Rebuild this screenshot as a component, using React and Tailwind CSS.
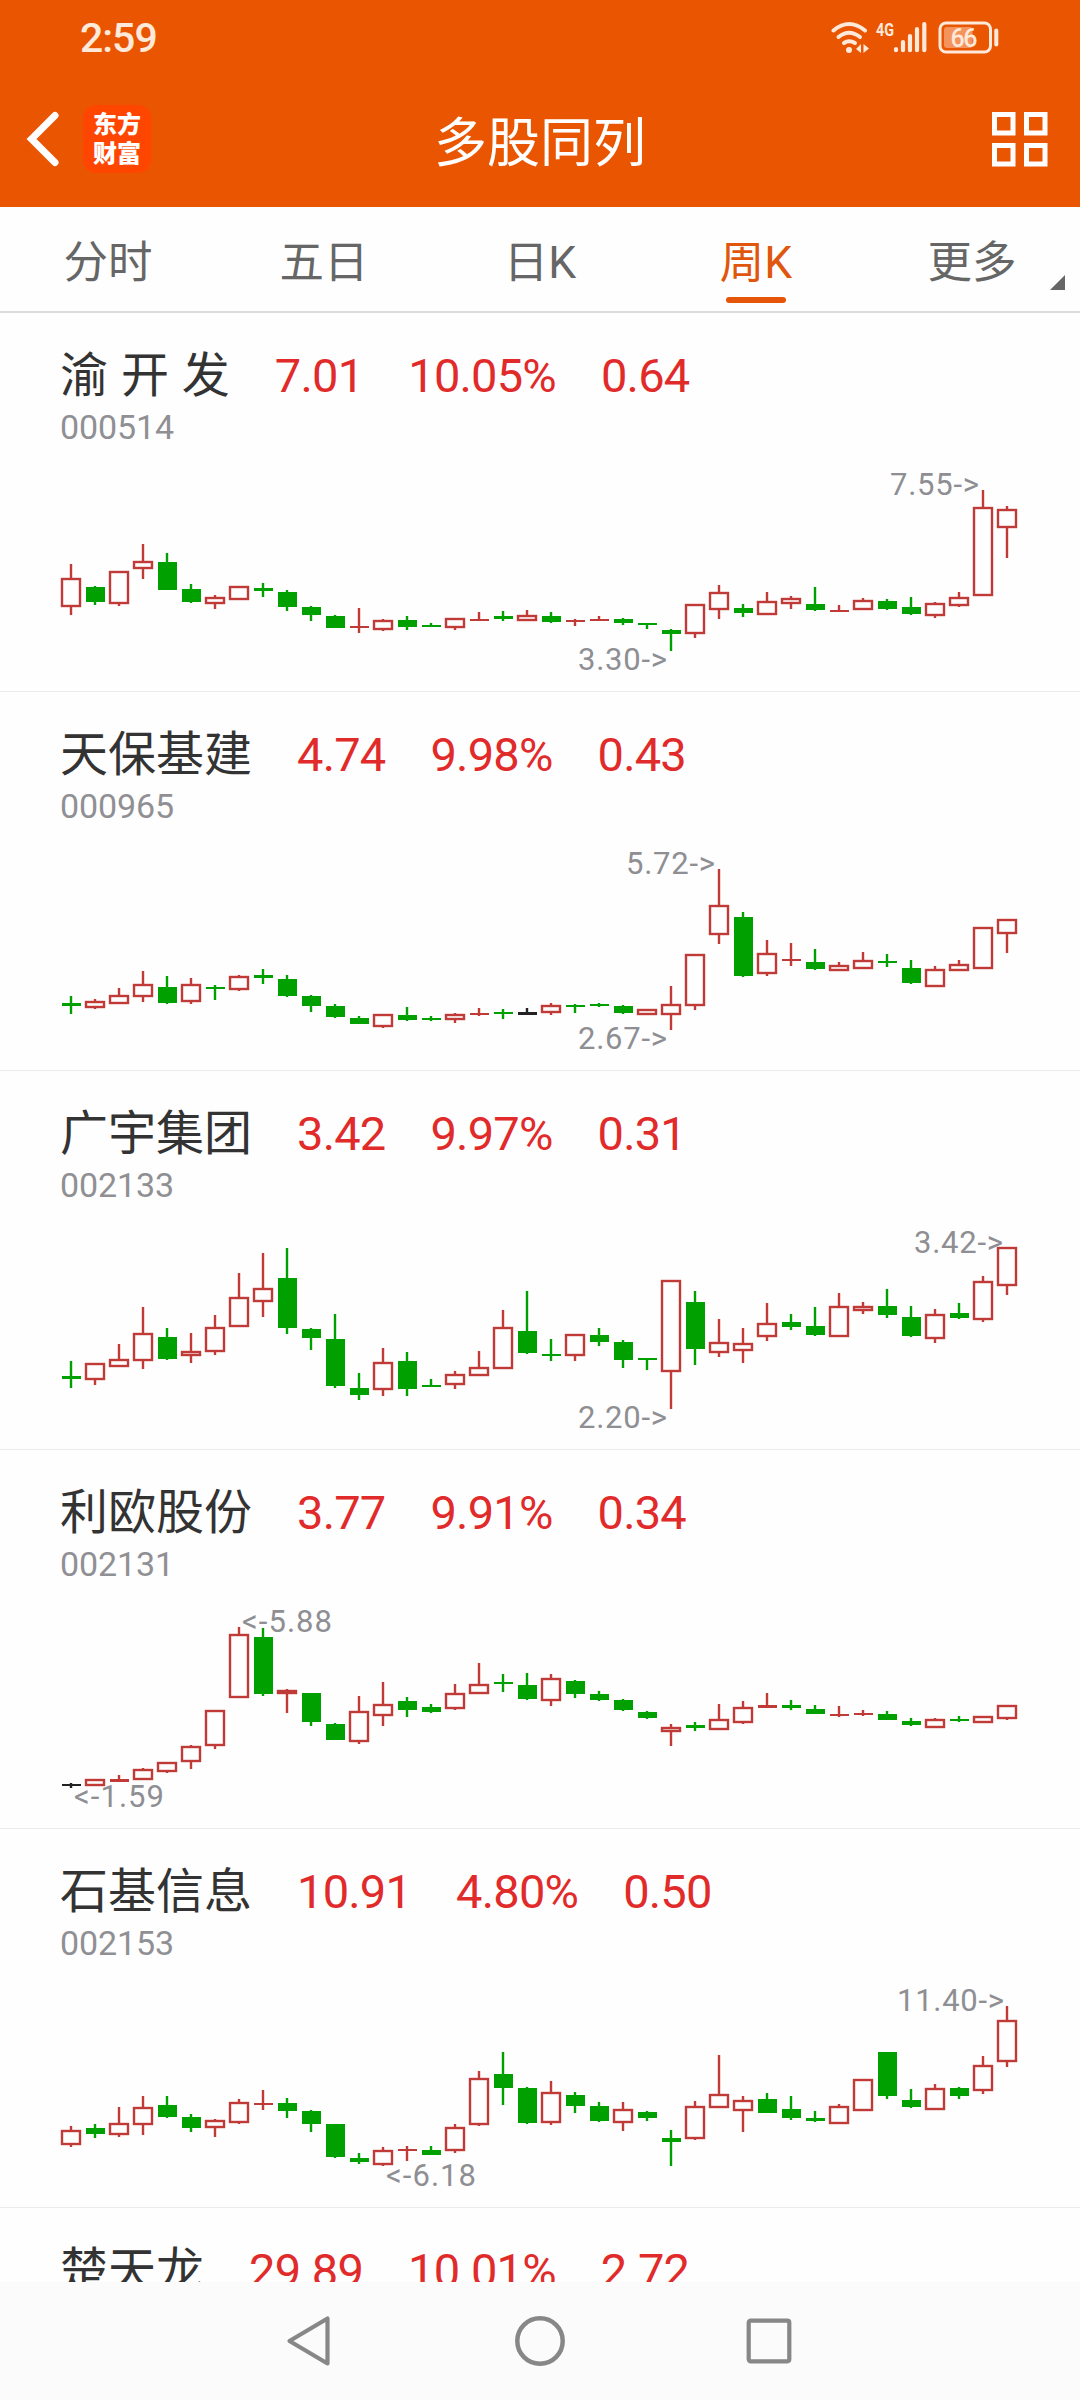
const UP = "#c03a37";
const DOWN = "#00a000";
const FLAT = "#222222";
const COLORS = { r: UP, g: DOWN, k: FLAT };

// Each candle: direction, high, body top, body bottom, low.
// Values are on the chart's fine grid; `scale` grid units make one pixel,
// `top` is where the grid starts inside the row.
const stocks = [
  {
    name: "渝 开 发", code: "000514", price: "7.01", pct: "10.05%", diff: "0.64",
    top: 17, scale: 3,
    labels: [["7.55->", 890, 182, 89], ["3.30->", 578, 357, 89]],
    candles: [
      ["r",703,744,831,854],["g",769,771,817,825],["r",724,724,822,828],["r",643,692,717,747],["g",669,695,779,779],
      ["g",762,778,817,818],["r",796,801,823,836],["r",768,768,810,810],["g",759,774,783,802],["g",781,786,830,843],
      ["g",829,831,856,872],["g",856,858,893,895],["r",835,888,894,909],["r",867,869,899,902],["g",858,870,891,899],
      ["g",878,885,891,892],["r",865,865,895,899],["r",847,866,872,873],["g",843,859,867,874],["r",841,855,874,874],
      ["g",845,859,876,879],["r",867,870,876,887],["r",857,866,872,873],["g",864,868,880,886],["g",878,878,885,896],
      ["g",898,900,912,963],["r",823,823,911,923],["r",766,785,841,867],["g",822,834,849,861],["r",787,814,855,855],
      ["r",797,805,822,837],["g",771,822,840,842],["r",825,839,846,846],["r",805,809,839,839],["g",808,813,838,840],
      ["g",801,831,852,855],["r",816,820,859,863],["r",785,801,828,832],["r",480,530,798,798],["r",529,538,593,684],
    ],
  },
  {
    name: "天保基建", code: "000965", price: "4.74", pct: "9.98%", diff: "0.43",
    top: 28, scale: 3,
    labels: [["5.72->", 626, 182, 89], ["2.67->", 578, 357, 89]],
    candles: [
      ["g",827,850,857,881],["r",838,842,865,868],["r",804,826,851,851],["r",753,792,831,846],["g",769,801,849,852],
      ["r",773,792,846,852],["g",794,800,808,840],["r",764,768,810,812],["g",746,766,773,792],["g",764,777,828,830],
      ["g",826,828,857,876],["g",851,857,891,895],["g",889,895,911,911],["r",881,883,921,925],["g",861,884,900,903],
      ["g",888,893,900,902],["r",878,882,901,909],["r",864,879,885,888],["g",867,875,881,896],["k",864,877,884,884],
      ["r",848,856,878,885],["g",853,854,860,878],["g",850,853,858,861],["g",855,857,879,882],["r",866,867,885,885],
      ["r",798,852,885,930],["r",702,702,858,871],["r",447,554,646,671],["g",577,590,768,771],["r",661,699,762,768],
      ["r",670,717,722,738],["g",687,726,747,749],["r",726,736,754,754],["r",696,719,747,747],["g",703,723,729,740],
      ["g",720,744,789,792],["r",738,747,800,800],["r",720,733,754,754],["r",622,622,747,747],["r",598,598,642,699],
    ],
  },
  {
    name: "广宇集团", code: "002133", price: "3.42", pct: "9.97%", diff: "0.31",
    top: 29, scale: 3,
    labels: [["3.42->", 914, 182, 89], ["2.20->", 578, 357, 89]],
    candles: [
      ["g",784,829,836,864],["r",788,789,839,855],["r",733,777,800,800],["r",622,699,783,808],["g",685,710,776,779],
      ["r",698,753,768,788],["r",646,682,756,765],["r",519,591,681,681],["r",460,563,605,650],["g",444,535,685,701],
      ["g",685,686,713,749],["g",642,717,859,863],["g",820,864,884,899],["r",744,785,871,887],["g",756,784,867,887],
      ["g",836,856,862,862],["r",813,821,855,867],["r",753,801,828,828],["r",630,682,807,807],["g",574,693,760,761],
      ["g",717,762,768,784],["r",701,702,768,784],["g",685,705,725,738],["g",721,726,780,804],["g",773,773,780,811],
      ["r",540,540,815,927],["g",574,606,748,796],["r",657,726,760,772],["r",685,730,752,788],["r",610,670,712,724],
      ["g",642,666,681,689],["g",622,678,705,709],["r",578,618,712,712],["r",606,618,633,641],["g",567,618,645,654],
      ["g",618,651,709,710],["r",626,642,717,729],["g",610,638,654,657],["r",527,543,661,665],["r",440,440,557,586],
    ],
  },
  {
    name: "利欧股份", code: "002131", price: "3.77", pct: "9.91%", diff: "0.34",
    top: 30, scale: 3,
    labels: [["<-5.88", 242, 182, 90], ["<-1.59", 74, 357, 90]],
    candles: [
      ["k",910,912,918,923],["r",897,898,917,917],["r",884,898,905,905],["r",864,867,901,901],["r",846,846,876,878],
      ["r",796,798,845,867],["r",689,689,797,807],["r",441,462,655,655],["g",443,471,642,647],["r",626,629,643,699],
      ["g",638,639,726,738],["g",728,732,779,781],["r",647,694,785,791],["r",606,672,708,738],["g",651,663,689,711],
      ["g",673,682,696,698],["r",612,638,687,689],["r",549,611,643,643],["g",582,607,613,636],["g",578,615,658,660],
      ["r",582,594,663,678],["g",601,603,641,654],["g",632,642,660,663],["g",657,660,690,692],["g",694,696,714,716],
      ["r",732,740,756,798],["g",726,736,743,753],["r",673,718,749,749],["r",664,682,729,731],["r",640,676,683,685],
      ["g",661,676,684,690],["g",675,687,702,702],["r",679,702,709,711],["r",690,700,706,708],["g",693,702,720,720],
      ["g",714,723,735,738],["r",714,716,744,744],["g",707,716,723,725],["r",708,708,728,728],["r",675,675,716,719],
    ],
  },
  {
    name: "石基信息", code: "002153", price: "10.91", pct: "4.80%", diff: "0.50",
    top: 31, scale: 2.904,
    labels: [["11.40->", 897, 182, 107], ["<-6.18", 386, 357, 90]],
    candles: [
      ["r",772,785,827,832],["g",766,778,797,808],["r",718,763,800,804],["r",686,717,770,800],["g",685,711,747,749],
      ["g",739,745,779,791],["r",752,755,779,803],["r",695,704,765,768],["r",669,706,712,725],["g",690,706,730,750],
      ["g",727,728,768,789],["g",767,768,863,866],["g",850,865,877,882],["r",833,842,886,890],["r",830,838,845,874],
      ["g",831,841,858,858],["r",768,774,846,850],["r",613,633,769,772],["g",559,621,663,711],["g",659,661,764,766],
      ["r",642,674,765,770],["g",675,682,713,735],["g",702,714,757,761],["r",703,723,763,787],["g",730,732,748,757],
      ["g",785,807,819,888],["r",700,714,810,812],["r",565,680,721,721],["r",686,696,728,790],["g",678,693,735,736],
      ["g",685,724,749,754],["g",729,749,758,760],["r",708,714,766,766],["r",635,635,728,728],["g",558,559,686,693],
      ["g",665,697,717,719],["r",650,662,725,725],["g",659,662,685,695],["r",568,594,670,679],["r",424,464,588,602],
    ],
  },
  { name: "楚天龙", code: "003040", price: "29.89", pct: "10.01%", diff: "2.72", top: 0, scale: 3, labels: [], candles: [] },
];

function Candle({ index, candle, top, scale }) {
  const [kind, ...values] = candle;
  const [high, open, close, low] = values.map((v) => Math.round(top + v / scale));
  const cx = 71 + 24 * index;
  const color = COLORS[kind];
  const height = Math.max(2, close - open);
  const hollow = kind === "r" && height > 3;
  return (
    <g>
      {high < open && <rect x={cx - 1.2} y={high} width="2.4" height={open - high} fill={color} />}
      {low > close && <rect x={cx - 1.2} y={close} width="2.4" height={low - close} fill={color} />}
      {hollow ? (
        <rect x={cx - 9} y={open + 1} width="18" height={height - 2} fill="none" stroke={color} strokeWidth="2.4" />
      ) : (
        <rect x={cx - 9} y={open} width="19" height={height} fill={color} />
      )}
    </g>
  );
}

function Chart({ stock }) {
  return (
    <svg className="block h-[246px] w-[1080px]" viewBox="0 132 1080 246">
      {stock.candles.map((c, i) => (
        <Candle key={i} index={i} candle={c} top={stock.top} scale={stock.scale} />
      ))}
      {stock.labels.map(([text, x, y, length]) => (
        <text key={text} x={x} y={y} textLength={length} fontSize="31" fill="#8e8e93" className="font-['Roboto',sans-serif]">
          {text}
        </text>
      ))}
    </svg>
  );
}

function StockRow({ stock }) {
  return (
    <section className="h-[379px] shrink-0 border-b border-[#ebebeb]">
      <div className="h-[132px] pt-[34px] pl-[60px]">
        <div className="flex h-[58px] items-center gap-[45px] text-[47px] leading-[58px] tracking-[-0.8px] text-[#e12b2b]">
          <h2 className="text-[48px] tracking-normal whitespace-pre text-[#333333] [word-spacing:1px]">{stock.name}</h2>
          <span>{stock.price}</span>
          <span>{stock.pct}</span>
          <span>{stock.diff}</span>
        </div>
        <div className="h-10 pt-0.5 text-[34px] leading-10 tracking-[-0.1px] text-[#909094]">{stock.code}</div>
      </div>
      <Chart stock={stock} />
    </section>
  );
}

function StatusBar() {
  return (
    <div className="flex h-[73px] items-center justify-between pr-[80px] pl-[80px] text-[#ffe9da]">
      <span className="pt-1 text-[41px] font-medium tracking-[-1px]">2:59</span>
      <svg width="170" height="40" viewBox="830 16 170 40" fill="none" stroke="currentColor">
        <g strokeWidth="4" strokeLinecap="round">
          <path d="M833.5 29.5Q849 16.500 865 29.500" />
          <path d="M838.500 36Q849 27.500 860 36" />
          <path d="M844 42Q849 38.500 855 42" />
        </g>
        <circle cx="849" cy="49" r="3" fill="currentColor" stroke="none" />
        <path d="M861 43v9l-5-4zM863.500 43v9l5.500-4.500z" fill="currentColor" stroke="none" />
        <text x="876" y="35" fontSize="19" textLength="18" lengthAdjust="spacingAndGlyphs" fill="currentColor" stroke="none" className="font-bold">4G</text>
        <g strokeWidth="4.200" strokeLinecap="round">
          <path d="M896 48v1.200M903 41v8.200M910 35v14.200M917 28v21.200M924.300 23v26.200" />
        </g>
        <rect x="940" y="22" width="50.500" height="29" rx="6" strokeWidth="3" />
        <rect x="944" y="26" width="28.500" height="21" rx="3" fill="#f4935c" stroke="none" />
        <path d="M996.300 29.500v14" strokeWidth="4" strokeLinecap="round" />
        <text x="950.500" y="46" fontSize="25" textLength="27" fill="currentColor" stroke="none" className="font-medium">66</text>
      </svg>
    </div>
  );
}

function TitleBar() {
  return (
    <div className="grid h-[134px] grid-cols-[1fr_auto_1fr] items-center px-6 pb-0.5 text-white">
      <div className="flex items-center">
        <svg width="40" height="60" viewBox="0 0 40 60" fill="none" stroke="currentColor" strokeWidth="7" strokeLinecap="round" strokeLinejoin="miter">
          <path d="M31 6.500 7.500 30 31 53.500" />
        </svg>
        <div className="ml-[19px] flex h-[68px] w-[68px] flex-col items-center justify-center rounded-[13px] bg-[#ff4600] pt-0.5 text-[24px] leading-[29px] font-black">
          <span>东方</span>
          <span>财富</span>
        </div>
      </div>
      <h1 className="pt-[10px] text-[53px] leading-[60px]">多股同列</h1>
      <svg className="mr-2 justify-self-end" width="56" height="56" viewBox="0 0 56 56" fill="none" stroke="currentColor" strokeWidth="5">
        <path d="M2.500 3.500h18.500v18.500h-18.500zM34.500 3.500h18.500v18.500h-18.500zM2.500 34.500h18.500v18.500h-18.500zM34.500 34.500h18.500v18.500h-18.500z" />
      </svg>
    </div>
  );
}

const tabs = ["分时", "五日", "日K", "周K", "更多"];

function Tabs() {
  return (
    <nav className="grid h-[106px] shrink-0 grid-cols-5 border-b-2 border-[#dcdcdc] text-[44.500px] leading-[60px] text-[#666666]">
      {tabs.map((tab) => {
        const active = tab === "周K";
        return (
          <div key={tab} className={active ? "relative flex justify-center pt-[26px] text-[#e0560c]" : "relative flex justify-center pt-[26px]"}>
            {tab}
            {active && <span className="absolute bottom-2 left-1/2 h-1.5 w-[60px] -translate-x-1/2 rounded-full bg-[#e5560a]" />}
            {tab === "更多" && (
              <svg className="absolute right-[15px] bottom-[21px]" width="15" height="15" viewBox="0 0 15 15">
                <path d="M15 0v15H0z" fill="#666666" />
              </svg>
            )}
          </div>
        );
      })}
    </nav>
  );
}

function NavBar() {
  return (
    <footer className="flex h-[118px] shrink-0 items-center justify-center gap-[175px] bg-[#fbfbfb] text-[#878787]">
      <svg width="56" height="56" viewBox="0 0 56 56" fill="none" stroke="currentColor" strokeWidth="4.200" strokeLinejoin="round">
        <path d="M8.500 28 46.500 5.500V50.500z" />
      </svg>
      <svg width="56" height="56" viewBox="0 0 56 56" fill="none" stroke="currentColor" strokeWidth="4.500">
        <circle cx="28" cy="28" r="22.700" />
      </svg>
      <svg width="56" height="56" viewBox="0 0 56 56" fill="none" stroke="currentColor" strokeWidth="4.200">
        <rect x="5.700" y="7.700" width="40.600" height="40.600" rx="2" />
      </svg>
    </footer>
  );
}

export default function App() {
  return (
    <div className="flex h-[2400px] w-[1080px] flex-col overflow-hidden bg-[#fefefe] font-['Roboto','Noto_Sans_CJK_SC',sans-serif]">
      <header className="h-[207px] shrink-0 bg-[#ea5502]">
        <StatusBar />
        <TitleBar />
      </header>
      <Tabs />
      <main className="flex min-h-0 flex-1 flex-col overflow-hidden">
        {stocks.map((s) => (
          <StockRow key={s.code} stock={s} />
        ))}
      </main>
      <NavBar />
    </div>
  );
}
